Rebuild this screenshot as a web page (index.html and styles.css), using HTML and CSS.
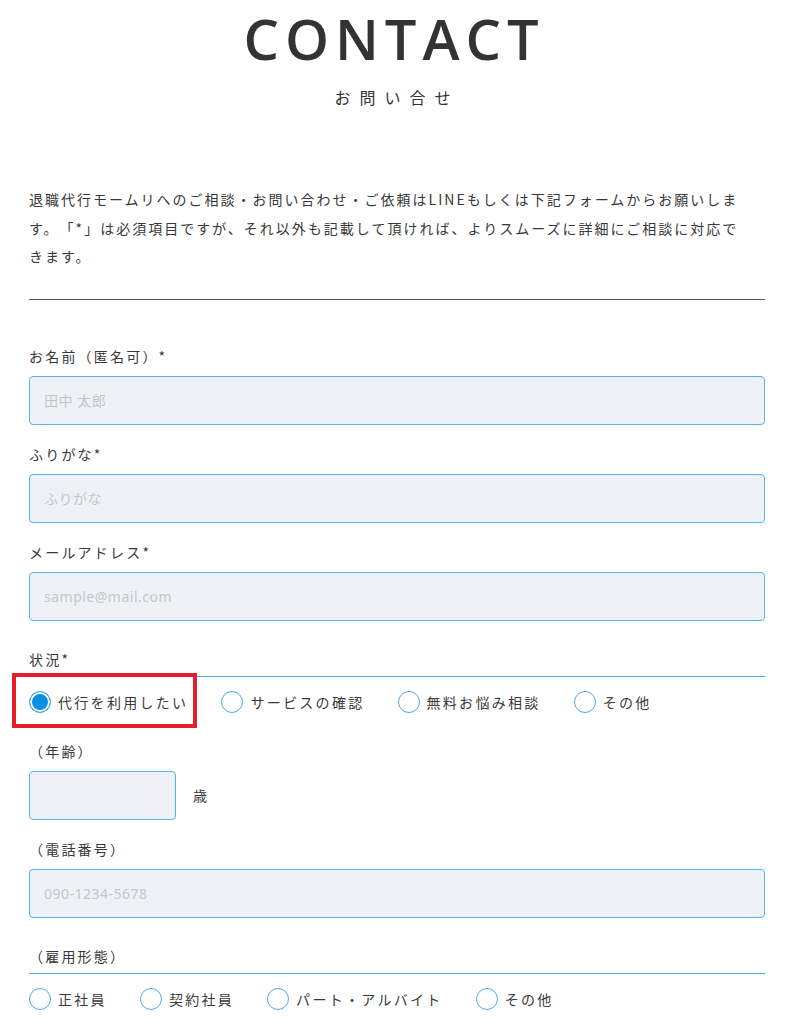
FILE: index.html
```html
<!DOCTYPE html>
<html lang="ja">
<head>
<meta charset="utf-8">
<title>CONTACT</title>
<link rel="stylesheet" href="styles.css">
</head>
<body>
<main class="page">
  <header class="head">
    <h1 class="title">CONTACT</h1>
    <p class="subtitle">お問い合せ</p>
  </header>

  <p class="lead">退職代行モームリへのご相談・お問い合わせ・ご依頼はLINEもしくは下記フォームからお願いしま<br>す。「*」は必須項目ですが、それ以外も記載して頂ければ、よりスムーズに詳細にご相談に対応で<br>きます。</p>

  <hr class="rule">

  <form class="form">
    <div class="field">
      <label class="label">お名前（匿名可）*</label>
      <input class="input" type="text" placeholder="田中 太郎">
    </div>
    <div class="field">
      <label class="label">ふりがな*</label>
      <input class="input" type="text" placeholder="ふりがな">
    </div>
    <div class="field">
      <label class="label">メールアドレス*</label>
      <input class="input" type="text" placeholder="sample@mail.com">
    </div>

    <div class="group">
      <div class="group-label">状況*</div>
      <div class="options">
        <label class="option marked"><input class="radio" type="radio" name="s" checked><span class="opt-text">代行を利用したい</span><span class="highlight"></span></label>
        <label class="option"><input class="radio" type="radio" name="s"><span class="opt-text">サービスの確認</span></label>
        <label class="option"><input class="radio" type="radio" name="s"><span class="opt-text">無料お悩み相談</span></label>
        <label class="option"><input class="radio" type="radio" name="s"><span class="opt-text">その他</span></label>
      </div>
    </div>

    <div class="field">
      <label class="label">（年齢）</label>
      <div class="age-row">
        <input class="input input-age" type="text">
        <span class="unit">歳</span>
      </div>
    </div>
    <div class="field">
      <label class="label">（電話番号）</label>
      <input class="input" type="text" placeholder="090-1234-5678">
    </div>

    <div class="group">
      <div class="group-label">（雇用形態）</div>
      <div class="options">
        <label class="option"><input class="radio" type="radio" name="e"><span class="opt-text">正社員</span></label>
        <label class="option"><input class="radio" type="radio" name="e"><span class="opt-text">契約社員</span></label>
        <label class="option"><input class="radio" type="radio" name="e"><span class="opt-text">パート・アルバイト</span></label>
        <label class="option"><input class="radio" type="radio" name="e"><span class="opt-text">その他</span></label>
      </div>
    </div>
  </form>
</main>
</body>
</html>
```

FILE: styles.css
```css
* { box-sizing: border-box; }

html, body {
  margin: 0;
  padding: 0;
  background: #ffffff;
}

body {
  font-family: "Noto Sans CJK JP", "Noto Sans", sans-serif;
  color: #383838;
  font-size: 14px;
  text-spacing-trim: space-all;
  text-autospace: no-autospace;
}

.page {
  width: 736px;
  margin-left: 29px;
}

.head {
  text-align: center;
  padding-top: 5px;
}

.title {
  margin: 0 0 0 -6px;
  font-family: "Open Sans", "Noto Sans", sans-serif;
  font-weight: 600;
  font-size: 56px;
  line-height: 67px;
  letter-spacing: 6px;
  color: #333333;
}

.subtitle {
  margin: 13px 0 0;
  font-size: 16px;
  line-height: 24px;
  letter-spacing: 9px;
  color: #333;
}

.lead {
  margin: 76px 0 0;
  font-size: 14px;
  line-height: 28.5px;
  letter-spacing: 2px;
  color: #383838;
}

.rule {
  margin: 28px 0 0;
  border: 0;
  border-top: 1px solid #555555;
  height: 0;
}

.form {
  margin-top: 45px;
}

.field {
  margin-bottom: 18px;
}

.label {
  display: block;
  font-size: 14px;
  line-height: 22px;
  letter-spacing: 2.2px;
  margin-bottom: 9px;
}

.input {
  display: block;
  width: 100%;
  height: 49px;
  border: 1px solid #55b3ee;
  border-radius: 4px;
  background: #eef2f7;
  padding: 0 14px;
  font-family: "Noto Sans", "Noto Sans CJK JP", sans-serif;
  font-size: 14px;
  letter-spacing: 0.5px;
  color: #333;
  outline: none;
}

.input::placeholder {
  color: #c2c6cb;
}

.age-row {
  display: flex;
  align-items: center;
  gap: 17px;
}

.input-age {
  width: 147px;
}

.unit {
  font-size: 14px;
  letter-spacing: 2px;
}

.group {
  margin-top: 27px;
  margin-bottom: 27px;
}

.group-label {
  font-size: 14px;
  line-height: 22px;
  letter-spacing: 2.2px;
  padding-bottom: 6px;
  border-bottom: 1px solid #4aa9ea;
}

.options {
  display: flex;
  align-items: center;
  column-gap: 33px;
  margin-top: 14px;
}

.option {
  position: relative;
  display: flex;
  align-items: center;
  gap: 7px;
  height: 22px;
  font-size: 14px;
  letter-spacing: 2.3px;
  color: #3a3a3a;
}

.radio {
  -webkit-appearance: none;
  appearance: none;
  margin: 0;
  width: 22px;
  height: 22px;
  border: 1.5px solid #4aa9ea;
  border-radius: 50%;
  background: #ffffff;
  flex: none;
}

.radio:checked {
  background: #0a8fe6;
  box-shadow: inset 0 0 0 2px #ffffff;
}

.highlight {
  position: absolute;
  left: -17px;
  top: -18px;
  width: 185px;
  height: 55px;
  border: 4px solid #e5202a;
  pointer-events: none;
}
```
